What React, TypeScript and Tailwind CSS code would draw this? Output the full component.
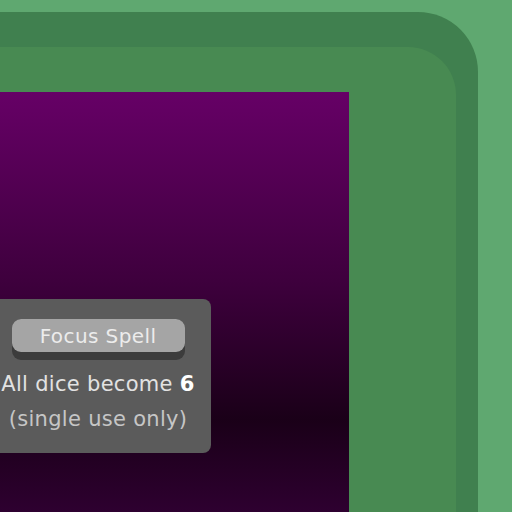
import React from 'react'

export default function App() {
  return (
    <div className="w-[512px] h-[512px] overflow-hidden bg-[#5fa870] pt-[12px] pr-[34px] font-['DejaVu_Sans',sans-serif]">
      {/* Outer frame */}
      <div className="h-[540px] bg-[#40804f] rounded-tr-[60px] pt-[35px] pr-[22px]">
        {/* Inner board */}
        <div className="h-full bg-[#488a52] rounded-tr-[48px] pt-[45px]">
          <div className="w-[349px] h-[420px] bg-[linear-gradient(to_bottom,#660066_0%,#3e003d_45%,#1a0018_78%,#2e0030_100%)] pt-[207px]">
            {/* Spell panel */}
            <div className="ml-[-15px] w-[226px] h-[154px] bg-[#5b5b5b] rounded-[8px] flex flex-col items-center pt-[20px]">
              <div className="w-[173px] h-[41px] rounded-[9px] bg-[#3c3c3c]">
                <div className="h-[33px] rounded-[9px] bg-[#a5a5a5] flex items-center justify-center text-[20px] text-[#ececec] leading-none tracking-[0.4px]">
                  Focus Spell
                </div>
              </div>
              <div className="mt-[12px] text-[21px] text-[#e2e2e2] leading-[24px] tracking-[0.3px] whitespace-nowrap">
                All dice become <span className="font-bold text-white">6</span>
              </div>
              <div className="mt-[11px] text-[21px] text-[#c6c6c6] leading-[24px] tracking-[0.3px] whitespace-nowrap">
                (single use only)
              </div>
            </div>
          </div>
        </div>
      </div>
    </div>
  )
}
